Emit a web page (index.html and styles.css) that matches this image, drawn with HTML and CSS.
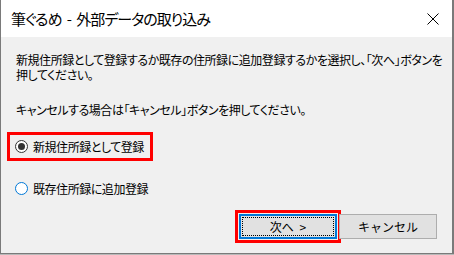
FILE: index.html
```html
<!DOCTYPE html>
<html lang="ja">

<head>
    <meta charset="UTF-8">
    <title>筆ぐるめ - 外部データの取り込み</title>
    <link rel="stylesheet" href="styles.css">
</head>

<body>
    <div class="dialog">
        <div class="titlebar">
            <span class="title">筆ぐるめ - 外部データの取り込み</span>
            <svg class="close" width="12" height="12" viewBox="0 0 12 12">
                <path d="M0.5 0.5 L11.5 11.5 M11.5 0.5 L0.5 11.5" stroke="#000" stroke-width="1" fill="none"/>
            </svg>
        </div>

        <div class="content">
            <p class="msg">新規住所録として登録するか既存の住所録に追加登録するかを選択し、「次へ」ボタンを押してください。</p>
            <p class="msg note">キャンセルする場合は「キャンセル」ボタンを押してください。</p>

            <!-- Choice list -->
            <div class="choices">
                <label class="choice mark">
                    <span class="radio checked"></span>
                    <span>新規住所録として登録</span>
                </label>
                <label class="choice">
                    <span class="radio"></span>
                    <span>既存住所録に追加登録</span>
                </label>
            </div>

            <div class="buttons">
                <button class="btn primary mark"><span class="focus">次へ &gt;</span></button>
                <button class="btn">キャンセル</button>
            </div>
        </div>
    </div>
</body>

</html>
```

FILE: styles.css
```css
* {
    padding: 0;
    margin: 0;
    box-sizing: border-box;
}

body {
    background: #b9b9b9;
    font-family: "Noto Sans CJK JP", "Noto Sans", sans-serif;
    font-feature-settings: "palt";
    color: #000;
}

.dialog {
    width: 454px;
    height: 254px;
    background-color: #f0f0f0;
    border-left: 1px solid #7a7a7a;
    border-right: 2px solid #7a7a7a;
    border-bottom: 1px solid #7a7a7a;
    display: flex;
    flex-direction: column;
}

.titlebar {
    height: 37px;
    background-color: #fff;
    display: flex;
    align-items: center;
    justify-content: space-between;
    padding: 0 13px 0 10px;
}

.title {
    font-size: 15px;
    letter-spacing: -1px;
    word-spacing: 3px;
}

.content {
    padding: 15px 15px 0 15px;
    font-size: 12px;
    letter-spacing: -0.45px;
}

.msg {
    line-height: 15px;
    width: 434px;
}

.note {
    margin-top: 20px;
}

.choices {
    margin-top: 18px;
    display: flex;
    flex-direction: column;
    align-items: flex-start;
    gap: 19px;
}

.choice {
    display: flex;
    align-items: center;
    gap: 5px;
    height: 23px;
    padding-left: 5px;
    margin-left: -6px;
    white-space: nowrap;
}

.choice.mark {
    width: 140px;
    outline: 3px solid #ff0000;
}

.radio {
    width: 13px;
    height: 13px;
    border-radius: 50%;
    border: 1px solid #0078d7;
    background-color: #fff;
    display: flex;
    align-items: center;
    justify-content: center;
}

.radio.checked {
    border-color: #333;
}

.radio.checked::after {
    content: "";
    width: 7px;
    height: 7px;
    border-radius: 50%;
    background-color: #333;
}

.buttons {
    margin-top: 14px;
    display: flex;
    justify-content: flex-end;
    gap: 2px;
}

.btn {
    width: 98px;
    height: 25px;
    font-family: inherit;
    font-size: 12px;
    letter-spacing: 0;
    word-spacing: 3px;
    background-color: #e1e1e1;
    border: 1px solid #adadad;
    color: #000;
    display: flex;
    align-items: center;
    justify-content: center;
}

.btn.primary {
    border: 2px solid #0078d7;
    padding: 1px;
}

.btn.mark {
    outline: 3px solid #ff0000;
    outline-offset: 1px;
}

.focus {
    width: 100%;
    height: 100%;
    border: 1px dotted #000;
    display: flex;
    align-items: center;
    justify-content: center;
}
```
